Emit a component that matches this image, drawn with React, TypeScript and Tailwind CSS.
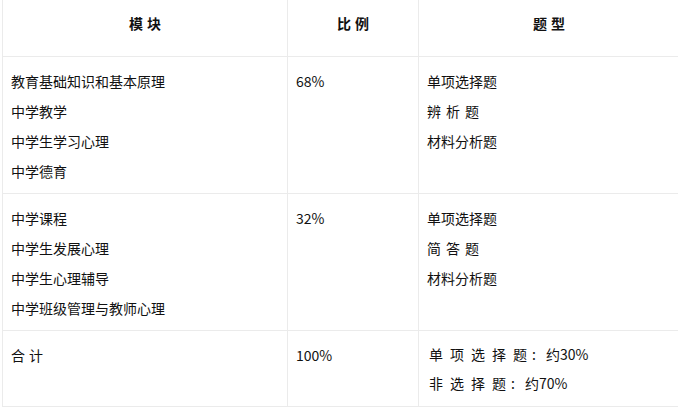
import React from "react";

const font = { fontFamily: '"Noto Sans CJK SC", "Noto Sans", sans-serif' };

function Spaced({ text, gap }: { text: string; gap: string }) {
  const parts = text.split(" ");
  return (
    <>
      {parts.map((p, i) => (
        <React.Fragment key={i}>
          {i > 0 && <span className={`inline-block ${gap}`} />}
          {p}
        </React.Fragment>
      ))}
    </>
  );
}

function Line({ children }: { children: React.ReactNode }) {
  return <div className="h-[30px] leading-[30px] whitespace-nowrap">{children}</div>;
}

function Colon() {
  return <span className="inline-block w-[19px] pl-[5px]">:</span>;
}

export default function App() {
  return (
    <div className="w-[678px] h-[408px] bg-white overflow-hidden text-[14px] text-[#111]" style={font}>
      <div className="ml-[2px] w-[677px] border-l border-b border-[#ebebeb] grid grid-cols-[285px_131px_261px]">
        <div className="h-[57px] border-r border-b border-[#ebebeb] flex items-center justify-center pb-[9px] font-bold">
          <Spaced text="模 块" gap="w-[4px]" />
        </div>
        <div className="h-[57px] border-r border-b border-[#ebebeb] flex items-center justify-center pb-[9px] font-bold">
          <Spaced text="比 例" gap="w-[4px]" />
        </div>
        <div className="h-[57px] border-r border-b border-[#ebebeb] flex items-center justify-center pb-[9px] font-bold">
          <Spaced text="题 型" gap="w-[4px]" />
        </div>

        <div className="h-[137px] border-r border-b border-[#ebebeb] pl-[8px] pt-[9px]">
          <Line>教育基础知识和基本原理</Line>
          <Line>中学教学</Line>
          <Line>中学生学习心理</Line>
          <Line>中学德育</Line>
        </div>
        <div className="h-[137px] border-r border-b border-[#ebebeb] pl-[8px] pt-[9px]">
          <Line>68%</Line>
        </div>
        <div className="h-[137px] border-r border-b border-[#ebebeb] pl-[8px] pt-[9px]">
          <Line>单项选择题</Line>
          <Line>
            <Spaced text="辨 析 题" gap="w-[5px]" />
          </Line>
          <Line>材料分析题</Line>
        </div>

        <div className="h-[137px] border-r border-b border-[#ebebeb] pl-[8px] pt-[9px]">
          <Line>中学课程</Line>
          <Line>中学生发展心理</Line>
          <Line>中学生心理辅导</Line>
          <Line>中学班级管理与教师心理</Line>
        </div>
        <div className="h-[137px] border-r border-b border-[#ebebeb] pl-[8px] pt-[9px]">
          <Line>32%</Line>
        </div>
        <div className="h-[137px] border-r border-b border-[#ebebeb] pl-[8px] pt-[9px]">
          <Line>单项选择题</Line>
          <Line>
            <Spaced text="简 答 题" gap="w-[5px]" />
          </Line>
          <Line>材料分析题</Line>
        </div>

        <div className="h-[75px] border-r border-[#ebebeb] pl-[8px] pt-[9px]">
          <Line>
            <Spaced text="合 计" gap="w-[4px]" />
          </Line>
        </div>
        <div className="h-[75px] border-r border-[#ebebeb] pl-[8px] pt-[9px]">
          <Line>100%</Line>
        </div>
        <div className="h-[75px] border-r border-[#ebebeb] pl-[10px] pt-[9px]">
          <div className="h-[29px] leading-[29px] whitespace-nowrap">
            <Spaced text="单 项 选 择 题" gap="w-[7px]" />
            <Colon />
            约30%
          </div>
          <div className="h-[29px] leading-[29px] whitespace-nowrap">
            <Spaced text="非 选 择 题" gap="w-[7px]" />
            <Colon />
            约70%
          </div>
        </div>
      </div>
    </div>
  );
}
